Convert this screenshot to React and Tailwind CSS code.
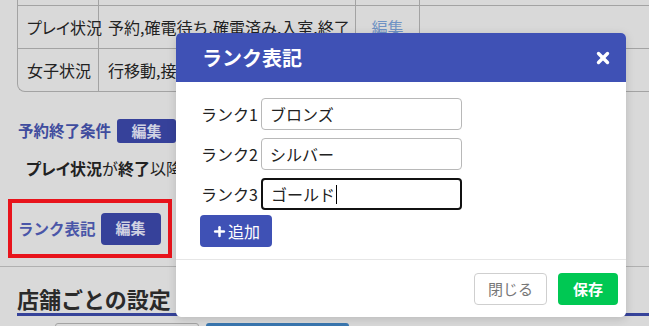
import { X, Plus } from 'lucide-react'

const rows = [
  { label: '', value: '', link: false },
  { label: 'プレイ状況', value: '予約,確電待ち,確電済み,入室,終了', link: true },
  { label: '女子状況', value: '行移動,接客中,終了', link: true },
]

const ranks = [
  { label: 'ランク1', value: 'ブロンズ' },
  { label: 'ランク2', value: 'シルバー' },
  { label: 'ランク3', value: 'ゴールド', focus: true },
]

const App = () => {
  return (
    <div className="relative h-[326px] w-[649px] overflow-hidden whitespace-nowrap bg-[#d9d9d9] font-['Noto_Sans_CJK_JP',sans-serif] text-[#222]">
      {/* page behind the modal */}
      <div className="-mt-[38px] ml-[17px] w-[700px] overflow-hidden rounded-bl-lg border-b border-l border-[#a3a3a3]">
        {rows.map((row, i) => (
          <div
            key={i}
            className={`flex h-[43px] ${i > 0 ? 'border-t border-[#a3a3a3]' : ''} text-[16px]`}
          >
            <div className="flex w-[81px] shrink-0 items-center border-r border-[#a3a3a3] pl-[9px] [font-feature-settings:'palt']">
              {row.label}
            </div>
            <div className="flex w-[257px] shrink-0 items-center border-r border-[#a3a3a3] pl-[9px]">
              {row.value}
            </div>
            <div className="flex w-[64px] shrink-0 items-center justify-center border-r border-[#a3a3a3] text-[#6f92c4]">
              {row.link ? '編集' : ''}
            </div>
            <div className="flex-1" />
          </div>
        ))}
      </div>

      <div className="mt-[27px] ml-[18px] flex items-center gap-[6px]">
        <span className="text-[15.5px] font-bold text-[#3f4c9e]">予約終了条件</span>
        <span className="flex h-[24px] w-[59px] items-center justify-center rounded-[3px] bg-[#36419a] text-[15px] font-bold text-[#d0d2e2]">
          編集
        </span>
      </div>

      <div className="mt-[14px] ml-[26px] text-[16px] leading-[22px]">
        <span className="font-bold [font-feature-settings:'palt']">プレイ状況</span>が<span className="font-bold">終了</span>以降
      </div>

      <div className="mt-[20px] ml-[8px] flex h-[59px] w-[164px] items-center gap-[5px] border-[4px] border-[#e8141c] pl-[6px]">
        <span className="text-[15.5px] font-bold text-[#4a56a8]">ランク表記</span>
        <span className="flex h-[32px] w-[60px] items-center justify-center rounded-[4px] bg-[#36419a] text-[15px] font-bold text-[#d0d2e2]">
          編集
        </span>
      </div>

      <div className="mt-[8px] border-t border-[#b0b0b0]" />

      <div className="ml-[17px] mt-[18px] border-b-[3px] border-[#36439a] pb-[2px]">
        <span className="block text-[22px] leading-[26px] font-bold text-[#2a2a2a]">店舗ごとの設定</span>
      </div>

      <div className="mt-[7px] flex gap-[7px] pl-[55px]">
        <div className="h-[20px] w-[144px] rounded-[3px] border border-[#a3a3a3] bg-[#d9d9d9]" />
        <div className="h-[20px] w-[143px] rounded-[3px] bg-[#3a77b0]" />
      </div>

      {/* modal */}
      <div className="absolute left-[176px] top-[33px] flex h-[284px] w-[450px] flex-col overflow-hidden rounded-[5px] bg-white shadow-[0_2px_10px_rgba(0,0,0,0.15)]">
        <div className="flex h-[49px] shrink-0 items-center justify-between bg-[#3f51b5] pl-[26px] pr-[14px]">
          <span className="text-[20px] font-bold text-white">ランク表記</span>
          <X size={18} strokeWidth={4.5} className="text-white" />
        </div>

        <div className="flex flex-col gap-[8px] pl-[25px] pt-[16px]">
          {ranks.map((r) => (
            <div key={r.label} className="flex items-center gap-[5px]">
              <span className="w-[55px] text-[16px]">{r.label}</span>
              <div
                className={`flex h-[32px] w-[201px] items-center rounded-[4px] pl-[8px] text-[16px] ${
                  r.focus ? 'border-2 border-[#111]' : 'border border-[#b8b8b8]'
                }`}
              >
                {r.value}
                {r.focus && <span className="ml-[1px] h-[19px] w-px bg-black" />}
              </div>
            </div>
          ))}
          <div>
            <button className="-ml-px mt-[-3px] flex h-[32px] w-[72px] items-center justify-center gap-[1px] rounded-[4px] bg-[#3f51b5] text-[16px] text-white">
              <Plus size={15} strokeWidth={4} />
              追加
            </button>
          </div>
        </div>

        <div className="mt-[12px] border-t border-[#e6e6e6]" />

        <div className="flex justify-end gap-[11px] pr-[8px] pt-[13px]">
          <button className="h-[32px] w-[73px] rounded-[4px] border border-[#cfcfcf] bg-white text-[15px] text-[#777]">
            閉じる
          </button>
          <button className="h-[32px] w-[60px] rounded-[4px] bg-[#00c853] text-[15px] font-bold text-white">
            保存
          </button>
        </div>
      </div>
    </div>
  )
}

export default App
